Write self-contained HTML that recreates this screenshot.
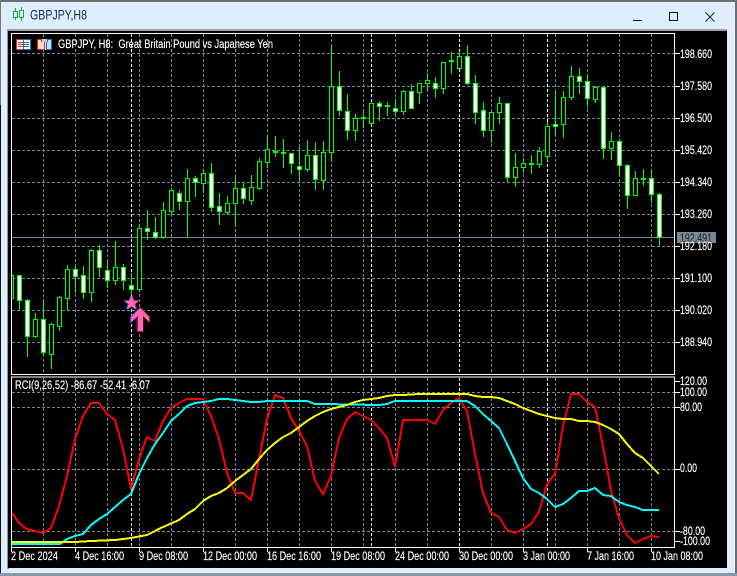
<!DOCTYPE html>
<html><head><meta charset="utf-8"><style>
html,body{margin:0;padding:0;background:#000;width:737px;height:576px;overflow:hidden}
svg{display:block;position:absolute;left:0;top:0}
text{font-family:"Liberation Sans",sans-serif;font-size:11.5px;fill:#fff;stroke:#fff;stroke-width:.15px}
</style></head><body>
<svg width="737" height="576" viewBox="0 0 737 576" xmlns="http://www.w3.org/2000/svg">
<defs><clipPath id="m"><rect x="12" y="34" width="662" height="340"/></clipPath></defs>
<!-- window -->
<rect width="737" height="576" fill="#dfeeff"/>
<rect width="737" height="2" fill="#6e6e6e"/>
<rect x="0" y="0" width="1" height="576" fill="#777"/>
<rect x="0" y="105" width="1" height="471" fill="#111"/>
<rect x="735" y="0" width="2" height="576" fill="#6e6e6e"/>
<rect x="0" y="573" width="737" height="3" fill="#8a96a2"/>
<rect x="7" y="29" width="720" height="2" fill="#a0a0a0"/>
<rect x="7" y="29" width="2" height="540" fill="#8f98a0"/>
<rect x="8" y="31" width="719" height="537" fill="#000"/>
<!-- title -->
<g shape-rendering="crispEdges" fill="none" stroke="#10b030">
<path d="M15.5 8V20M21.5 7V21"/>
<rect x="13.5" y="11.5" width="4" height="6" fill="#dfeeff"/>
<rect x="19.5" y="10.5" width="4" height="7" fill="#dfeeff"/>
</g>
<text x="30" y="19.5" textLength="57" lengthAdjust="spacingAndGlyphs" style="font-size:14px;fill:#1b2a4a;stroke:none">GBPJPY,H8</text>
<!-- window buttons -->
<g shape-rendering="crispEdges">
<rect x="633" y="20" width="9" height="1" fill="#000"/>
<rect x="669.5" y="12.5" width="8" height="8" fill="none" stroke="#111"/>
</g>
<path d="M705.5 12.5L714.5 21.5M714.5 12.5L705.5 21.5" stroke="#222" fill="none"/>
<!-- frames -->
<g shape-rendering="crispEdges" fill="none" stroke-width="1">
<!-- gray grid -->
<path stroke="#778899" stroke-dasharray="3 2" d="M43.5 34V374M75.5 34V374M107.5 34V374M139.5 34V374M171.5 34V374M203.5 34V374M235.5 34V374M267.5 34V374M299.5 34V374M331.5 34V374M363.5 34V374M395.5 34V374M427.5 34V374M491.5 34V374M523.5 34V374M555.5 34V374M587.5 34V374M619.5 34V374M651.5 34V374
M43.5 378V547M75.5 378V547M107.5 378V547M139.5 378V547M171.5 378V547M203.5 378V547M235.5 378V547M267.5 378V547M299.5 378V547M331.5 378V547M363.5 378V547M395.5 378V547M427.5 378V547M491.5 378V547M523.5 378V547M555.5 378V547M587.5 378V547M619.5 378V547M651.5 378V547
M12 53.5H674M12 86.5H674M12 118.5H674M12 150.5H674M12 182.5H674M12 214.5H674M12 246.5H674M12 278.5H674M12 310.5H674M12 342.5H674
M12 392.5H674M12 407.5H674M12 469.5H674M12 531.5H674"/>
<!-- period separators -->
<path stroke="#fff" stroke-dasharray="3 2" d="M131.5 34V374M371.5 34V374M459.5 34V374M547.5 34V374M131.5 378V547M371.5 378V547M459.5 378V547M547.5 378V547"/>
<!-- price line -->
<path stroke="#778899" d="M12 237.5H674"/>
</g>
<!-- candles -->
<g clip-path="url(#m)" shape-rendering="crispEdges" stroke="#00ff00" stroke-width="1">
<path fill="none" d="M19.5 275V310M27.5 299V357M35.5 313V338M43.5 299V356M51.5 323V369M59.5 296V331M67.5 265V310M75.5 267V293M83.5 266V299M91.5 249V302M99.5 245V277M107.5 261V288M115.5 241V285M123.5 264V290M131.5 273V295M139.5 225V289M147.5 210V240M155.5 217V239M163.5 202V239M171.5 188V216M179.5 190V210M187.5 169V237M195.5 176V197M203.5 169V193M211.5 163V212M219.5 193V225M227.5 196V215M235.5 177V227M243.5 183V204M251.5 175V205M259.5 158V190M267.5 135V168M275.5 136V157M283.5 139V168M291.5 153V174M299.5 147V183M307.5 140V172M315.5 142V190M323.5 141V190M331.5 45V162M339.5 71V116M347.5 94V140M355.5 114V141M363.5 109V128M371.5 103V125M379.5 101V121M387.5 102V116M395.5 99V116M403.5 90V115M411.5 84V109M419.5 83V104M427.5 73V91M435.5 77V98M443.5 62V94M451.5 52V74M459.5 51V68M467.5 45V85M475.5 75V124M483.5 102V137M491.5 112V143M499.5 97V124M507.5 103V182M515.5 153V187M523.5 158V173M531.5 155V174M539.5 147V168M547.5 122V161M555.5 91V137M563.5 91V138M571.5 66V100M579.5 68V94M587.5 74V108M595.5 86V103M603.5 87V159M611.5 132V160M619.5 139V176M627.5 164V209M635.5 171V195M643.5 169V186M651.5 170V203M659.5 193V246"/>
<path fill="#000" d="M9.5 275.5h4v23h-4zM33.5 319.5h4v17h-4zM49.5 324.5h4v30h-4zM57.5 297.5h4v29h-4zM65.5 269.5h4v29h-4zM89.5 250.5h4v42h-4zM113.5 267.5h4v13h-4zM137.5 228.5h4v61h-4zM161.5 210.5h4v27h-4zM169.5 190.5h4v21h-4zM185.5 178.5h4v23h-4zM201.5 173.5h4v10h-4zM225.5 203.5h4v9h-4zM233.5 188.5h4v15h-4zM249.5 187.5h4v13h-4zM257.5 161.5h4v27h-4zM265.5 149.5h4v13h-4zM305.5 155.5h4v14h-4zM321.5 152.5h4v28h-4zM329.5 86.5h4v66h-4zM353.5 118.5h4v12h-4zM369.5 103.5h4v20h-4zM401.5 91.5h4v20h-4zM417.5 83.5h4v9h-4zM425.5 80.5h4v3h-4zM441.5 62.5h4v26h-4zM457.5 56.5h4v12h-4zM489.5 112.5h4v18h-4zM497.5 103.5h4v9h-4zM513.5 167.5h4v10h-4zM521.5 163.5h4v4h-4zM537.5 151.5h4v13h-4zM545.5 126.5h4v30h-4zM561.5 97.5h4v27h-4zM569.5 76.5h4v21h-4zM593.5 87.5h4v12h-4zM609.5 141.5h4v7h-4zM633.5 178.5h4v17h-4z"/>
<path fill="#fff" d="M17.5 275.5h4v25h-4zM25.5 300.5h4v36h-4zM41.5 319.5h4v33h-4zM73.5 269.5h4v7h-4zM81.5 275.5h4v17h-4zM97.5 250.5h4v17h-4zM105.5 270.5h4v10h-4zM121.5 267.5h4v13h-4zM129.5 285.5h4v4h-4zM145.5 228.5h4v3h-4zM153.5 232.5h4v5h-4zM177.5 193.5h4v8h-4zM193.5 178.5h4v4h-4zM209.5 173.5h4v34h-4zM217.5 206.5h4v5h-4zM241.5 188.5h4v10h-4zM273.5 151.5h4v1h-4zM281.5 152.5h4v1h-4zM289.5 153.5h4v10h-4zM297.5 166.5h4v3h-4zM313.5 155.5h4v24h-4zM337.5 86.5h4v24h-4zM345.5 111.5h4v19h-4zM361.5 117.5h4v1h-4zM377.5 103.5h4v3h-4zM385.5 105.5h4v1h-4zM393.5 108.5h4v3h-4zM409.5 91.5h4v17h-4zM433.5 83.5h4v5h-4zM449.5 60.5h4v1h-4zM465.5 56.5h4v27h-4zM473.5 83.5h4v29h-4zM481.5 110.5h4v20h-4zM505.5 103.5h4v74h-4zM529.5 163.5h4v1h-4zM553.5 124.5h4v2h-4zM577.5 76.5h4v5h-4zM585.5 81.5h4v17h-4zM601.5 87.5h4v61h-4zM617.5 141.5h4v24h-4zM625.5 165.5h4v30h-4zM641.5 178.5h4v1h-4zM649.5 178.5h4v16h-4zM657.5 194.5h4v43h-4z"/>
</g>
<!-- star and arrow -->
<g>
<polygon transform="translate(-1 0)" points="131.5,295 133.4,300.5 139,300.5 134.5,304 136.2,309.5 131.5,306.2 126.8,309.5 128.5,304 124,300.5 129.6,300.5" fill="#4a3fc0"/>
<polygon transform="translate(1 0)" points="131.5,295 133.4,300.5 139,300.5 134.5,304 136.2,309.5 131.5,306.2 126.8,309.5 128.5,304 124,300.5 129.6,300.5" fill="#c01850"/>
<polygon points="131.5,295 133.4,300.5 139,300.5 134.5,304 136.2,309.5 131.5,306.2 126.8,309.5 128.5,304 124,300.5 129.6,300.5" fill="#ff69b4"/>
</g>
<g shape-rendering="crispEdges">
<polygon points="140,307 150,317 150,323 143.5,317 143.5,332 137,332 137,317 130,323 130,317" fill="#b01030"/>
<polygon points="139.5,307 130,317 130,323 136.5,317 136.5,331 137,331 137,317 131,323" fill="#4a3fc0"/>
<polygon points="140,308 149,317 149,322 143,316 143,331 138,331 138,316 131,322 131,317" fill="#ff69b4"/>
</g>
<!-- indicator lines -->
<g fill="none" stroke-width="2" shape-rendering="crispEdges" clip-path="none">
<polyline stroke="#ff0000" points="12,513 19,523 27,529 35,531 43,533 51,528 59,506 67,476 75,439 83,416 91,403 99,403 107,414 115,420 123,449 131,489 139,459 147,437 155,441 163,421 171,408 179,403 187,399 195,399 203,399 211,416 219,439 227,473 235,493 243,493 251,500 259,459 267,419 275,395 283,398 291,418 299,431 307,446 315,481 323,494 331,476 339,438 347,419 355,412 363,416 371,420 379,428 387,438 395,467 403,420 411,420 419,420 427,420 435,424 443,410 451,403 459,398 467,411 475,454 483,493 491,513 499,517 507,530 515,533 523,529 531,524 539,512 547,484 555,474 563,426 571,394 579,394 587,402 595,407 603,446 611,491 619,518 627,535 635,543 643,539 651,536 659,537"/>
<polyline stroke="#00ffff" points="12,544 60,544 67,539 75,536 83,534 91,525 99,519 107,514 115,507 123,500 131,494 139,474 147,458 155,444 163,433 171,421 179,414 187,406 195,403 203,402 211,401 219,399 227,399 235,400 243,401 251,402 259,402 267,401 275,401 307,401 315,404 323,404 379,405 387,404 395,401 403,401 467,401 475,406 483,414 491,421 499,428 507,444 515,461 523,478 531,489 539,493 547,499 555,507 563,504 571,498 579,491 587,491 595,488 603,495 611,496 619,502 627,505 635,507 643,510 659,510"/>
<polyline stroke="#ffff00" points="12,542 60,542 75,542 91,541 115,540 131,538 147,535 155,531 163,527 179,520 187,514 195,509 203,501 211,496 219,493 227,488 235,481 243,475 251,469 259,459 267,450 275,443 283,437 291,433 299,427 307,421 315,416 323,412 331,409 339,407 347,405 355,402 363,400 371,399 379,398 387,396 395,395 403,395 419,394 427,394 459,394 467,394 475,396 483,397 491,397 499,398 507,401 515,404 523,408 531,411 539,414 547,416 555,418 563,419 571,419 579,421 587,421 595,422 603,425 611,429 619,434 627,444 635,453 643,458 651,466 659,474"/>
</g>
<!-- frames and ticks -->
<g shape-rendering="crispEdges" fill="none" stroke="#fff">
<path d="M11.5 33.5H674.5V374.5H11.5Z"/>
<path d="M11.5 377H674.5V547.5H11.5Z"/>
<path d="M675 53.5H680M675 86.5H680M675 118.5H680M675 150.5H680M675 182.5H680M675 214.5H680M675 246.5H680M675 278.5H680M675 310.5H680M675 342.5H680M675 381.5H680M675 392.5H680M675 407.5H680M675 469.5H680M675 531.5H680M675 541.5H680"/>
<path d="M11.5 548V552M75.5 548V552M139.5 548V552M203.5 548V552M267.5 548V552M331.5 548V552M395.5 548V552M459.5 548V552M523.5 548V552M587.5 548V552M651.5 548V552"/>
</g>
<!-- price tag -->
<rect x="677" y="232" width="39" height="11" fill="#778899"/>
<text x="680" y="242" textLength="32" lengthAdjust="spacingAndGlyphs" style="fill:#1a1a1a;stroke:none">192.491</text>
<!-- price labels -->
<text x="680" y="58" textLength="32" lengthAdjust="spacingAndGlyphs">198.660</text>
<text x="680" y="90" textLength="32" lengthAdjust="spacingAndGlyphs">197.580</text>
<text x="680" y="122" textLength="32" lengthAdjust="spacingAndGlyphs">196.500</text>
<text x="680" y="154" textLength="32" lengthAdjust="spacingAndGlyphs">195.420</text>
<text x="680" y="186" textLength="32" lengthAdjust="spacingAndGlyphs">194.340</text>
<text x="680" y="218" textLength="32" lengthAdjust="spacingAndGlyphs">193.260</text>
<text x="680" y="250" textLength="32" lengthAdjust="spacingAndGlyphs">192.180</text>
<text x="680" y="282" textLength="32" lengthAdjust="spacingAndGlyphs">191.100</text>
<text x="680" y="314" textLength="32" lengthAdjust="spacingAndGlyphs">190.020</text>
<text x="680" y="346" textLength="32" lengthAdjust="spacingAndGlyphs">188.940</text>
<text x="680" y="385" textLength="27" lengthAdjust="spacingAndGlyphs">120.00</text>
<text x="680" y="396" textLength="27" lengthAdjust="spacingAndGlyphs">100.00</text>
<text x="680" y="411" textLength="22" lengthAdjust="spacingAndGlyphs">80.00</text>
<text x="680" y="472" textLength="17" lengthAdjust="spacingAndGlyphs">0.00</text>
<text x="680" y="535" textLength="25" lengthAdjust="spacingAndGlyphs">-80.00</text>
<text x="680" y="545" textLength="30" lengthAdjust="spacingAndGlyphs">-100.00</text>
<!-- date labels -->
<text x="11" y="560" textLength="47" lengthAdjust="spacingAndGlyphs">2 Dec 2024</text>
<text x="75" y="560" textLength="49" lengthAdjust="spacingAndGlyphs">4 Dec 16:00</text>
<text x="139" y="560" textLength="49" lengthAdjust="spacingAndGlyphs">9 Dec 08:00</text>
<text x="203" y="560" textLength="54" lengthAdjust="spacingAndGlyphs">12 Dec 00:00</text>
<text x="267" y="560" textLength="54" lengthAdjust="spacingAndGlyphs">16 Dec 16:00</text>
<text x="331" y="560" textLength="54" lengthAdjust="spacingAndGlyphs">19 Dec 08:00</text>
<text x="395" y="560" textLength="54" lengthAdjust="spacingAndGlyphs">24 Dec 00:00</text>
<text x="459" y="560" textLength="54" lengthAdjust="spacingAndGlyphs">30 Dec 00:00</text>
<text x="523" y="560" textLength="47" lengthAdjust="spacingAndGlyphs">3 Jan 00:00</text>
<text x="587" y="560" textLength="47" lengthAdjust="spacingAndGlyphs">7 Jan 16:00</text>
<text x="651" y="560" textLength="52" lengthAdjust="spacingAndGlyphs">10 Jan 08:00</text>
<!-- header -->
<text x="15" y="389" textLength="135" lengthAdjust="spacingAndGlyphs">RCI(9,26,52) -86.67 -52.41 -6.07</text>
<text x="58" y="48" textLength="215" lengthAdjust="spacingAndGlyphs">GBPJPY, H8:&#160; Great Britain Pound vs Japanese Yen</text>
<!-- header icons -->
<g shape-rendering="crispEdges">
<rect x="16" y="39" width="15" height="11" fill="#fff"/>
<rect x="16.5" y="39.5" width="7" height="10" fill="#fff" stroke="#d83030"/>
<rect x="23.5" y="39.5" width="7" height="10" fill="#fff" stroke="#1a70b8"/>
<path d="M18 42.5H23M18 44.5H23M18 46.5H23" stroke="#d83030"/>
<path d="M24 42.5H29M24 44.5H29M24 46.5H29" stroke="#1a70b8"/>
<path d="M37 39H43V41H46V50H37Z" fill="#fbd8cc"/>
<path d="M37.5 39.5H41.5V41.5H44.5V49.5H37.5Z" fill="#fbd8cc" stroke="#c83030"/>
<path d="M46.5 41.5H47.5V39.5H51.5V49.5H46.5Z" fill="#bfe0f5" stroke="#1a70b8"/>
<rect x="42" y="39" width="5" height="3" fill="#d0d0d0"/>
</g>
</svg>
</body></html>
